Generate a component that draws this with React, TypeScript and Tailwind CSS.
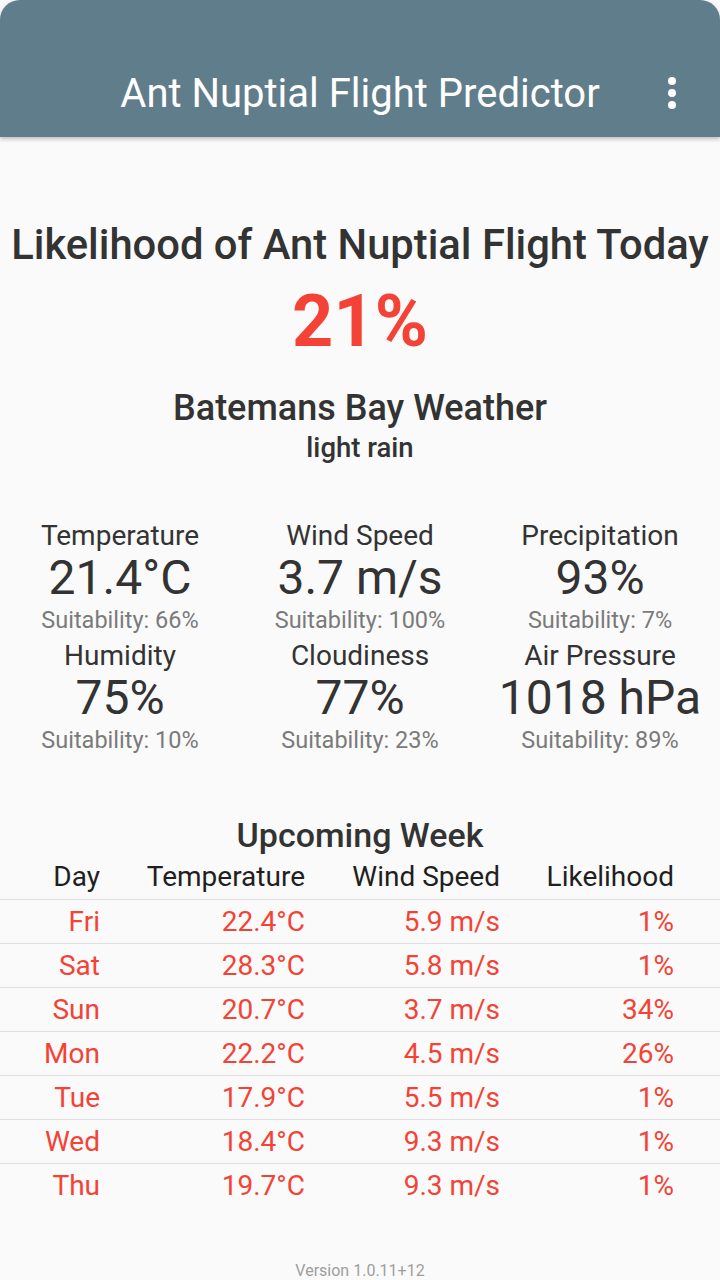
const stats = [
  { label: 'Temperature', value: '21.4°C', suit: 66 },
  { label: 'Wind Speed', value: '3.7 m/s', suit: 100 },
  { label: 'Precipitation', value: '93%', suit: 7 },
  { label: 'Humidity', value: '75%', suit: 10 },
  { label: 'Cloudiness', value: '77%', suit: 23 },
  { label: 'Air Pressure', value: '1018 hPa', suit: 89 },
]

const week = [
  ['Fri', '22.4°C', '5.9 m/s', '1%'],
  ['Sat', '28.3°C', '5.8 m/s', '1%'],
  ['Sun', '20.7°C', '3.7 m/s', '34%'],
  ['Mon', '22.2°C', '4.5 m/s', '26%'],
  ['Tue', '17.9°C', '5.5 m/s', '1%'],
  ['Wed', '18.4°C', '9.3 m/s', '1%'],
  ['Thu', '19.7°C', '9.3 m/s', '1%'],
]

const cols = 'grid grid-cols-[100px_205px_195px_174px] text-right'

export default function App() {
  return (
    <div className="min-h-screen bg-[#fafafa] font-['Roboto',sans-serif] text-[#333]">
      <div className="h-[137px] rounded-t-[20px] bg-[#607d8b] shadow-[0_2px_4px_rgba(0,0,0,0.25)] flex items-center pt-[50px] relative">
        <h1 className="w-full text-center text-[40px] leading-[48px] text-white">
          Ant Nuptial Flight Predictor
        </h1>
        <div className="absolute right-[44px] top-[77px] flex flex-col gap-[4px]">
          <span className="w-[8px] h-[8px] rounded-full bg-white" />
          <span className="w-[8px] h-[8px] rounded-full bg-white" />
          <span className="w-[8px] h-[8px] rounded-full bg-white" />
        </div>
      </div>

      <div className="flex flex-col items-center">
        <h2 className="mt-[84px] text-[41.75px] leading-[48px] font-medium whitespace-nowrap">
          Likelihood of Ant Nuptial Flight Today
        </h2>
        <p className="mt-[13px] text-[72px] leading-[80px] font-bold text-[#f44336]">21%</p>
        <h3 className="mt-[24px] text-[36px] leading-[44px] font-medium">Batemans Bay Weather</h3>
        <p className="text-[27.5px] leading-[36px] font-medium">light rain</p>
      </div>

      <div className="mt-[52px] grid grid-cols-3">
        {stats.map((s) => (
          <div key={s.label} className="flex flex-col items-center">
            <span className="h-[36px] leading-[36px] text-[28px]">{s.label}</span>
            <span className="h-[48px] leading-[48px] text-[48px]">{s.value}</span>
            <span className="h-[36px] leading-[36px] text-[23.5px] text-[#7a7a7a]">Suitability: {s.suit}%</span>
          </div>
        ))}
      </div>

      <h3 className="mt-[57px] text-center text-[34px] leading-[40px] font-medium">Upcoming Week</h3>

      <div className="text-[28px]">
        <div className={clsx(cols, 'h-[44px] items-center text-[#1f1f1f]')}>
          <span>Day</span>
          <span>Temperature</span>
          <span>Wind Speed</span>
          <span>Likelihood</span>
        </div>
        {week.map((r) => (
          <div key={r[0]} className={clsx(cols, 'h-[44px] items-center border-t border-[#e0e0e0] text-[#f44336]')}>
            {r.map((c, i) => (
              <span key={i}>{c}</span>
            ))}
          </div>
        ))}
      </div>

      <p className="mt-[54px] text-center text-[16px] leading-[20px] text-[#9e9e9e]">Version 1.0.11+12</p>
    </div>
  )
}

function clsx(...a: string[]) {
  return a.join(' ')
}
